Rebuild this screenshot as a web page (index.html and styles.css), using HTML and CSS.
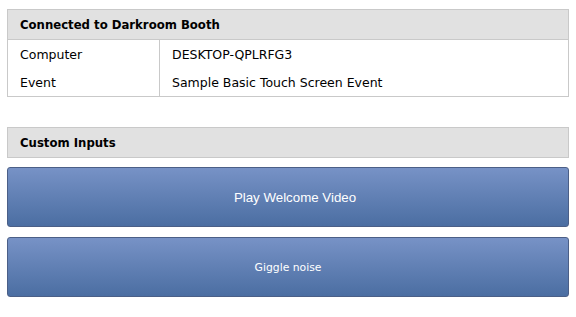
FILE: index.html
```html
<!DOCTYPE html>
<html lang="en">

<head>
    <meta charset="utf-8">
    <meta name="viewport" content="width=device-width, initial-scale=1.0">
    <title>Darkroom Booth</title>
    <link rel="stylesheet" href="styles.css">
</head>

<body>
    <section class="panel">
        <h2 class="panel-head">Connected to Darkroom Booth</h2>
        <table class="info">
            <tr>
                <td class="label">Computer</td>
                <td>DESKTOP-QPLRFG3</td>
            </tr>
            <tr>
                <td class="label">Event</td>
                <td>Sample Basic Touch Screen Event</td>
            </tr>
        </table>
    </section>

    <section class="panel inputs">
        <h2 class="panel-head">Custom Inputs</h2>
    </section>

    <div class="buttons">
        <button class="input-btn big">Play Welcome Video</button>
        <button class="input-btn small">Giggle noise</button>
    </div>
</body>

</html>
```

FILE: styles.css
```css
body {
    margin: 9px 7px;
    font-family: "DejaVu Sans", Verdana, sans-serif;
    font-size: 12.5px;
    color: #000;
    background-color: #fff;
}

.panel {
    border: 1px solid #c9c9c9;
}

.panel-head {
    margin: 0;
    height: 29px;
    line-height: 31px;
    padding: 0 12px;
    background-color: #e1e1e1;
    font-size: 11.7px;
    font-weight: bold;
}

.info {
    width: 100%;
    border-collapse: collapse;
    border-top: 1px solid #c9c9c9;
}

.info td {
    height: 28px;
    padding: 0 12px;
    vertical-align: middle;
}

.info .label {
    width: 127px;
    border-right: 1px solid #c9c9c9;
}

.inputs {
    margin-top: 30px;
}

.buttons {
    display: grid;
    gap: 10px;
    margin-top: 9px;
}

.input-btn {
    height: 60px;
    border: 1px solid #4b5f87;
    border-radius: 3px;
    background: linear-gradient(#7792c6, #4b6ea2);
    color: #fff;
}

.big {
    padding-left: 20px;
    font-family: "Liberation Sans", Arial, sans-serif;
    font-size: 13.3px;
}

.small {
    font-family: "DejaVu Sans", Verdana, sans-serif;
    font-size: 10.8px;
}
```
